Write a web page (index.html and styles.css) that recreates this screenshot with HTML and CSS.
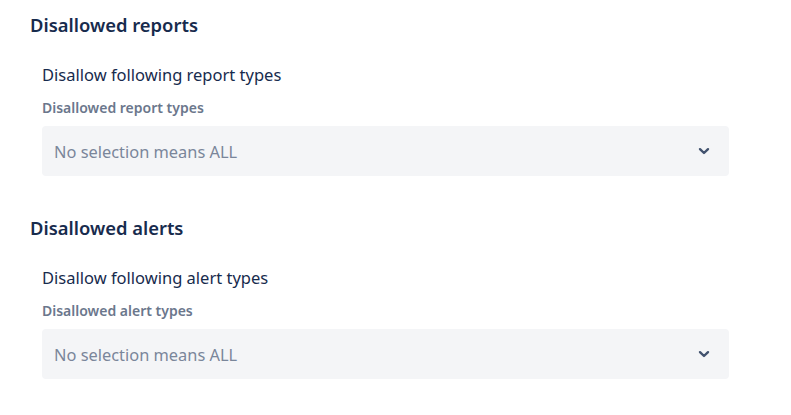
FILE: index.html
```html
<!DOCTYPE html>
<html>
<head>
<meta charset="utf-8">
<link rel="stylesheet" href="styles.css">
</head>
<body>
<div class="page">
  <section class="section">
    <h2 class="heading">Disallowed reports</h2>
    <div class="field">
      <div class="desc">Disallow following report types</div>
      <div class="label">Disallowed report types</div>
      <div class="select">
        <span class="placeholder">No selection means ALL</span>
        <svg class="chev" width="24" height="24" viewBox="0 0 24 24"><path d="M8 10.2l4 3.8 4-3.8" fill="none" stroke="#42526e" stroke-width="2.4" stroke-linecap="round" stroke-linejoin="round"/></svg>
      </div>
    </div>
  </section>
  <section class="section">
    <h2 class="heading">Disallowed alerts</h2>
    <div class="field">
      <div class="desc">Disallow following alert types</div>
      <div class="label">Disallowed alert types</div>
      <div class="select">
        <span class="placeholder">No selection means ALL</span>
        <svg class="chev" width="24" height="24" viewBox="0 0 24 24"><path d="M8 10.2l4 3.8 4-3.8" fill="none" stroke="#42526e" stroke-width="2.4" stroke-linecap="round" stroke-linejoin="round"/></svg>
      </div>
    </div>
  </section>
</div>
</body>
</html>
```
FILE: styles.css
```css
* { box-sizing: border-box; }
body {
  margin: 0;
  background: #fff;
  font-family: "Noto Sans", "Open Sans", sans-serif;
  color: #172b4d;
}
.page {
  padding: 12px 62px 0 30px;
  display: flex;
  flex-direction: column;
  gap: 39px;
}
.heading {
  margin: 0;
  font-size: 18.4px;
  font-weight: 600;
  line-height: 26px;
  color: #172b4d;
}
.field {
  padding: 26px 0 0 12px;
}
.desc {
  font-size: 16.5px;
  line-height: 22px;
}
.label {
  margin-top: 14px;
  font-size: 14px;
  font-weight: 600;
  line-height: 16px;
  color: #6b778c;
}
.select {
  margin-top: 10px;
  height: 50px;
  background: #f4f5f7;
  border-radius: 4px;
  display: flex;
  align-items: center;
  justify-content: space-between;
  padding: 0 13px 0 12px;
}
.placeholder {
  font-size: 16.4px;
  color: #7a869a;
}
.chev { display: block; }
```
